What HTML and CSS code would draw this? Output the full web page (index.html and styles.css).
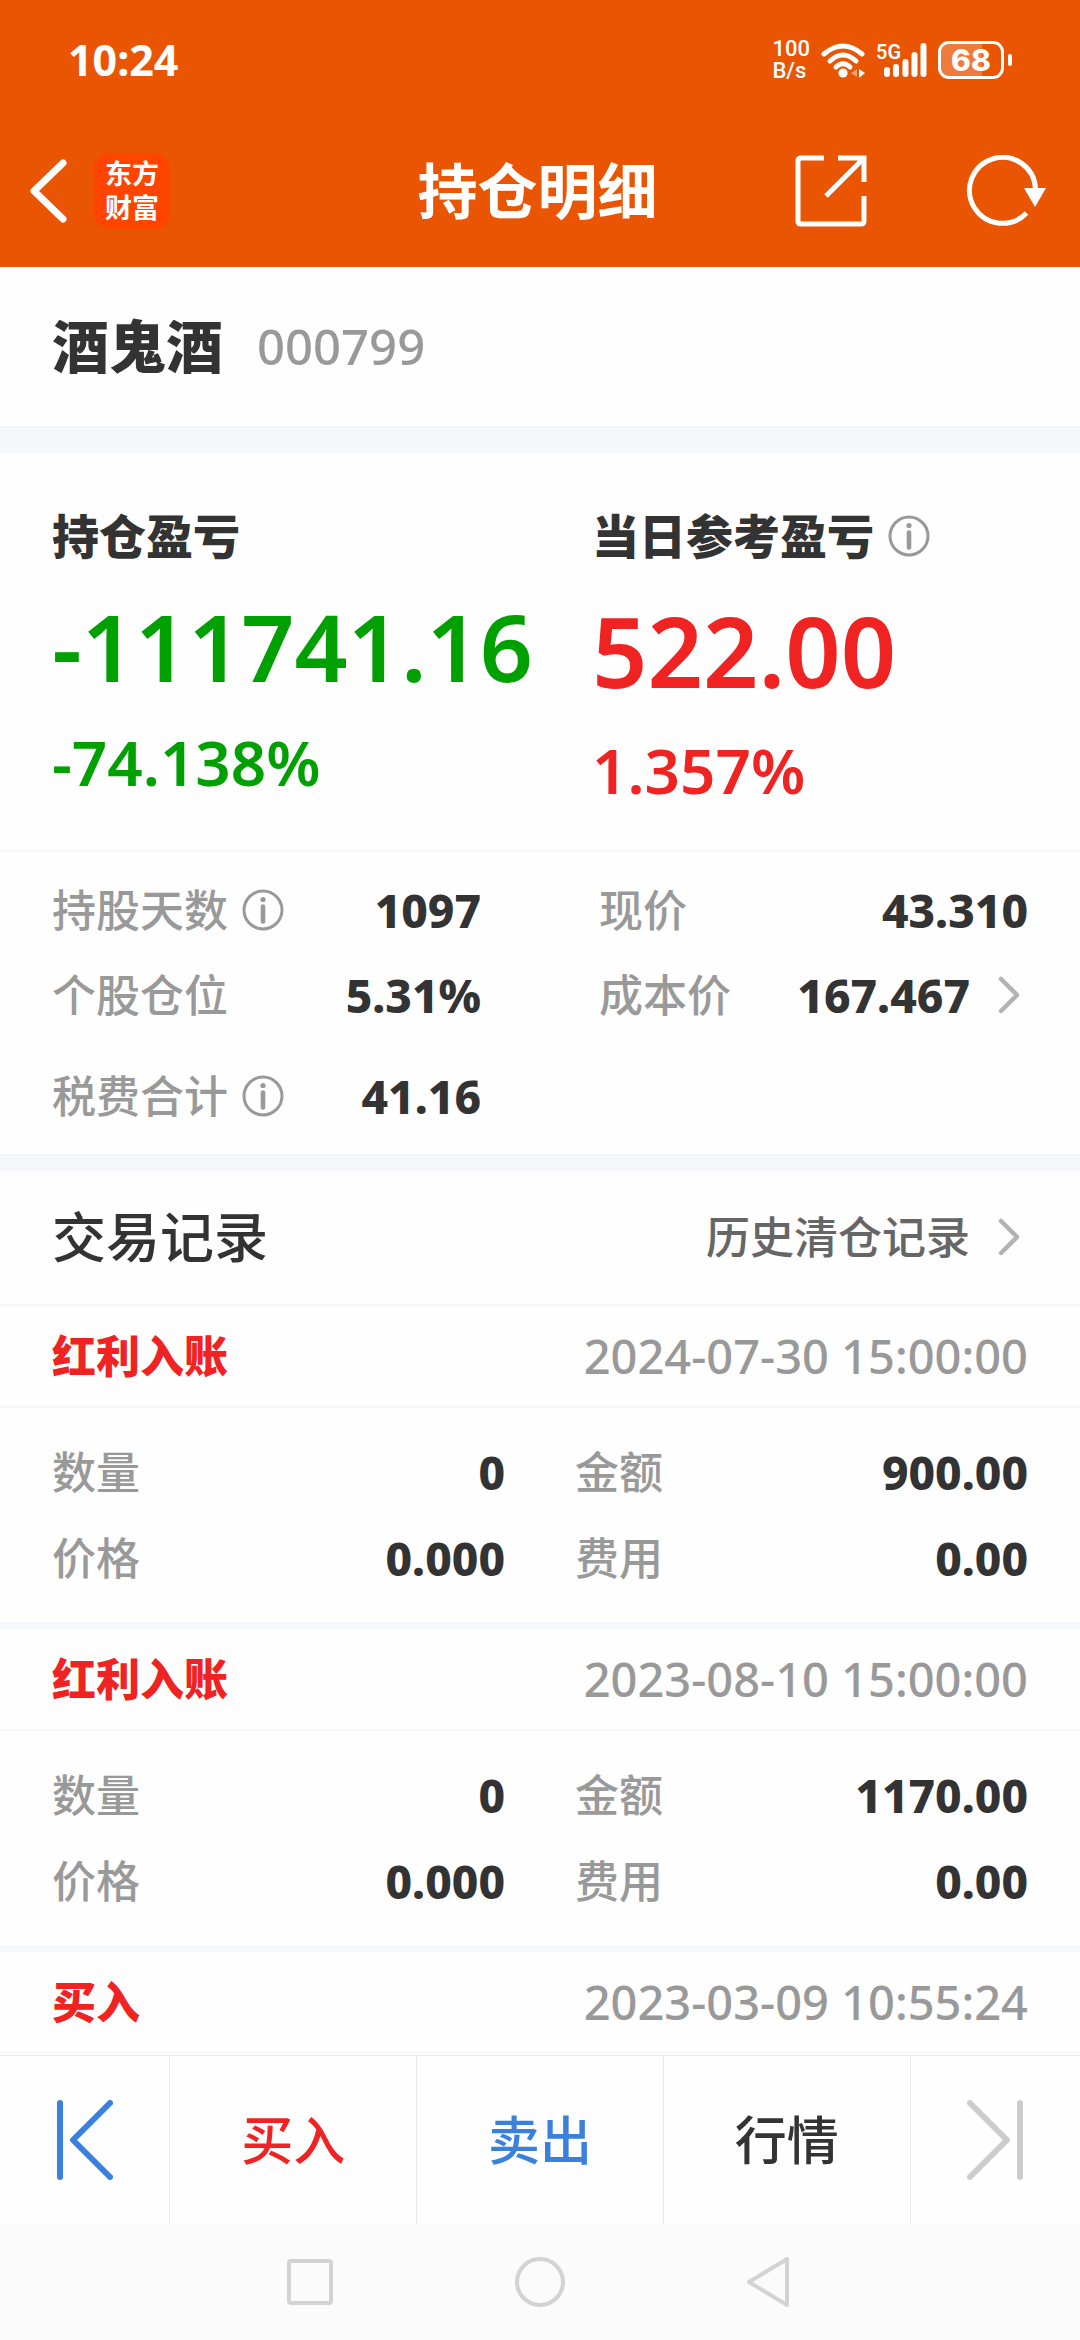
FILE: index.html
```html
<!DOCTYPE html>
<html lang="zh-CN">
<head>
    <meta charset="UTF-8">
    <meta name="viewport" content="width=device-width, initial-scale=1.0">
    <title>持仓明细</title>
    <link rel="stylesheet" href="styles.css">
</head>
<body>
    <!-- 图标定义 -->
    <svg class="sprite" aria-hidden="true">
        <symbol id="icon-info" viewBox="0 0 42 42">
            <circle cx="21" cy="21" r="19" fill="none" stroke="currentColor" stroke-width="3"/>
            <circle cx="21" cy="10.500" r="2.600" fill="currentColor"/>
            <path d="M21 17.500v15" stroke="currentColor" stroke-width="4.600" stroke-linecap="round"/>
        </symbol>
        <symbol id="icon-more" viewBox="0 0 22 38">
            <path d="M3 3l16 16L3 35" fill="none" stroke="currentColor" stroke-width="4.500" stroke-linecap="round" stroke-linejoin="round"/>
        </symbol>
    </svg>

    <div class="app">
        <header class="header">
            <div class="status-bar">
                <span class="clock">10:24</span>
                <div class="status-icons">
                    <div class="net-speed"><span>100</span><span>B/s</span></div>
                    <svg class="wifi" viewBox="0 0 44 36" width="44" height="36" fill="none" stroke="#fff" stroke-width="5" stroke-linecap="round">
                        <path d="M3 12Q22-4 41 12"/>
                        <path d="M9 19Q22 7 35 19"/>
                        <path d="M15 25Q22 18.500 29 25"/>
                        <circle cx="22" cy="31" r="4.600" fill="#fff" stroke="none"/>
                        <path d="M30 31l6-4v8z" fill="#f5a070" stroke="none"/>
                        <path d="M38 27l6 4-6 5z" fill="#fff" stroke="none"/>
                    </svg>
                    <div class="signal">
                        <span class="signal-type">5G</span>
                        <svg viewBox="0 0 44 34" width="44" height="34" stroke="#fff" stroke-width="6" stroke-linecap="round">
                            <path d="M4 27v4M13 24v7M22.500 19v12M31.500 12v19M40.500 3v28"/>
                        </svg>
                    </div>
                    <div class="battery"><span>68</span></div>
                </div>
            </div>
            <nav class="nav-bar">
                <div class="nav-left">
                    <button class="icon-btn" type="button" aria-label="返回">
                        <svg viewBox="0 0 38 64" width="38" height="64" fill="none" stroke="#fff" stroke-width="7" stroke-linecap="round" stroke-linejoin="round">
                            <path d="M34 4L5 32l29 28"/>
                        </svg>
                    </button>
                    <span class="logo">东方<br>财富</span>
                </div>
                <h1 class="nav-title">持仓明细</h1>
                <div class="nav-right">
                    <button class="icon-btn" type="button" aria-label="分享">
                        <svg viewBox="0 0 72 72" width="72" height="72" fill="none" stroke="#fff" stroke-width="5">
                            <path d="M29 3H6Q3 3 3 6v60q0 3 3 3h60q3 0 3-3V41"/>
                            <path d="M43 3h26v24M68 4L31 41"/>
                        </svg>
                    </button>
                    <button class="icon-btn" type="button" aria-label="刷新">
                        <svg viewBox="0 0 80 72" width="80" height="72" fill="none" stroke="#fff" stroke-width="5">
                            <path d="M60.500 58A33 33 0 1 1 69.500 34"/>
                            <path d="M58 33h22L69 52z" fill="#fff" stroke="none"/>
                        </svg>
                    </button>
                </div>
            </nav>
        </header>

        <main class="content">
            <section class="stock">
                <h2 class="stock-name">酒鬼酒</h2>
                <span class="stock-code">000799</span>
            </section>

            <section class="profit">
                <div class="profit-item down">
                    <h3>持仓盈亏</h3>
                    <div class="amount">-111741.16</div>
                    <div class="percent">-74.138%</div>
                </div>
                <div class="profit-item up">
                    <h3>当日参考盈亏 <svg class="info"><use href="#icon-info"/></svg></h3>
                    <div class="amount amount-lg">522.00</div>
                    <div class="percent">1.357%</div>
                </div>
            </section>

            <section class="stats">
                <dl>
                    <div class="row"><dt>持股天数 <svg class="info"><use href="#icon-info"/></svg></dt><dd>1097</dd></div>
                    <div class="row"><dt>个股仓位</dt><dd>5.31%</dd></div>
                    <div class="row row-tax"><dt>税费合计 <svg class="info"><use href="#icon-info"/></svg></dt><dd>41.16</dd></div>
                </dl>
                <dl>
                    <div class="row"><dt>现价</dt><dd>43.310</dd></div>
                    <div class="row"><dt>成本价</dt><dd>167.467 <svg class="more"><use href="#icon-more"/></svg></dd></div>
                </dl>
            </section>

            <section class="records">
                <div class="records-head">
                    <h2>交易记录</h2>
                    <a href="#">历史清仓记录 <svg class="more"><use href="#icon-more"/></svg></a>
                </div>

                <article class="record">
                    <div class="record-head">
                        <h3>红利入账</h3>
                        <time>2024-07-30 15:00:00</time>
                    </div>
                    <dl class="record-body">
                        <div class="row"><dt>数量</dt><dd>0</dd></div>
                        <div class="row"><dt>金额</dt><dd>900.00</dd></div>
                        <div class="row"><dt>价格</dt><dd>0.000</dd></div>
                        <div class="row"><dt>费用</dt><dd>0.00</dd></div>
                    </dl>
                </article>

                <article class="record">
                    <div class="record-head">
                        <h3>红利入账</h3>
                        <time>2023-08-10 15:00:00</time>
                    </div>
                    <dl class="record-body">
                        <div class="row"><dt>数量</dt><dd>0</dd></div>
                        <div class="row"><dt>金额</dt><dd>1170.00</dd></div>
                        <div class="row"><dt>价格</dt><dd>0.000</dd></div>
                        <div class="row"><dt>费用</dt><dd>0.00</dd></div>
                    </dl>
                </article>

                <article class="record">
                    <div class="record-head">
                        <h3>买入</h3>
                        <time>2023-03-09 10:55:24</time>
                    </div>
                </article>
            </section>
        </main>

        <footer class="tab-bar">
            <button class="prev" type="button" aria-label="上一只">
                <svg viewBox="0 0 56 80" width="56" height="80" fill="none" stroke="currentColor" stroke-width="6" stroke-linecap="round" stroke-linejoin="round">
                    <path d="M3 3v74M53 3L16 40l37 37"/>
                </svg>
            </button>
            <button class="buy" type="button">买入</button>
            <button class="sell" type="button">卖出</button>
            <button class="quote" type="button">行情</button>
            <button class="next" type="button" aria-label="下一只">
                <svg viewBox="0 0 56 80" width="56" height="80" fill="none" stroke="currentColor" stroke-width="6" stroke-linecap="round" stroke-linejoin="round">
                    <path d="M53 3v74M3 3l37 37L3 77"/>
                </svg>
            </button>
        </footer>

        <div class="system-nav">
            <svg viewBox="0 0 50 52" width="50" height="52"><rect x="4" y="5" width="42" height="42" rx="2"/></svg>
            <svg viewBox="0 0 52 52" width="52" height="52"><circle cx="26" cy="26" r="23"/></svg>
            <svg viewBox="0 0 50 52" width="50" height="52"><path d="M42 3v46L4 26z"/></svg>
        </div>
    </div>
</body>
</html>
```

FILE: styles.css
```css
:root {
    --brand: #EA5504;
    --logo: #FF4400;
    --text: #333333;
    --gray: #999999;
    --red: #F02323;
    --green: #00A000;
    --blue: #3A80DC;
    --band: #F6F7FA;
    --line: #F8F8F8;
    --side: 52px;
}

* {
    box-sizing: border-box;
    margin: 0;
    padding: 0;
}

body {
    font-family: 'Noto Sans', 'Noto Sans CJK SC', sans-serif;
    font-size: 44px;
    line-height: 56px;
    color: var(--text);
    background: #FEFEFE;
}

button {
    font: inherit;
    color: inherit;
    background: none;
    border: 0;
}

svg {
    display: block;
}

.sprite {
    position: absolute;
    width: 0;
    height: 0;
}

.app {
    display: flex;
    flex-direction: column;
    height: 100vh;
}

/* 顶部 */
.header {
    flex: none;
    padding-bottom: 38px;
    background: var(--brand);
    color: #FFFFFF;
}

.status-bar {
    display: flex;
    justify-content: space-between;
    align-items: center;
    padding: 32px 68px 31px 68px;
}

.clock {
    font-size: 43px;
    font-weight: 700;
}

.status-icons {
    display: flex;
    align-items: center;
    gap: 11px;
}

.net-speed {
    display: flex;
    flex-direction: column;
    font-family: Roboto, sans-serif;
    font-size: 22px;
    font-weight: 500;
    line-height: 22px;
}

.signal {
    display: flex;
    position: relative;
    padding-left: 7px;
}

.signal-type {
    position: absolute;
    top: 0;
    left: 0;
    font-family: Roboto, sans-serif;
    font-size: 20px;
    font-weight: 600;
    line-height: 18px;
}

.battery {
    position: relative;
    width: 66px;
    height: 38px;
    margin-right: 8px;
    border: 3px solid #FFFFFF;
    border-radius: 11px;
    background: linear-gradient(90deg, rgba(255, 255, 255, 0.22) 68%, transparent 68%);
    font-family: Inter, sans-serif;
    font-size: 30px;
    font-weight: 800;
    line-height: 32px;
    text-align: center;
}

.battery::after {
    content: '';
    position: absolute;
    top: 10px;
    right: -11px;
    width: 4px;
    height: 12px;
    border-radius: 2px;
    background: #FFFFFF;
}

.nav-bar {
    display: grid;
    grid-template-columns: 1fr auto 1fr;
    align-items: center;
    padding: 34px 34px 0 29px;
}

.nav-left,
.nav-right {
    display: flex;
    align-items: center;
}

.nav-left {
    gap: 27px;
}

.nav-right {
    justify-content: flex-end;
    gap: 99px;
}

.nav-title {
    font-size: 60px;
    font-weight: 600;
    line-height: 76px;
}

.logo {
    width: 76px;
    padding: 4px 0;
    border-radius: 16px;
    background: var(--logo);
    font-size: 27px;
    font-weight: 700;
    line-height: 34px;
    text-align: center;
}

/* 股票名称 */
.stock {
    display: flex;
    align-items: center;
    gap: 34px;
    padding: 41px var(--side) 42px;
}

.stock-name {
    font-size: 57px;
    font-weight: 800;
    line-height: 76px;
}

.stock-code {
    font-size: 49px;
    font-weight: 500;
    color: var(--gray);
}

/* 盈亏 */
.profit {
    display: grid;
    grid-template-columns: 1fr 1fr;
    padding: 55px 0 44px;
    border-top: 27px solid var(--band);
    border-bottom: 2px solid var(--line);
}

.profit-item {
    padding-left: var(--side);
}

.amount {
    font-size: 93px;
    font-weight: 600;
    line-height: 108px;
}

.amount-lg {
    font-size: 97px;
    line-height: 116px;
}

.percent {
    margin-top: 26px;
    font-size: 62px;
    font-weight: 600;
    line-height: 72px;
}

.up {
    color: var(--red);
}

.down {
    color: var(--green);
}

.profit-item h3 {
    display: flex;
    align-items: center;
    gap: 14px;
    margin-bottom: 28px;
    font-size: 47px;
    font-weight: 800;
    line-height: 56px;
    color: var(--text);
}

.info {
    width: 42px;
    height: 42px;
    color: var(--gray);
}

.more {
    width: 22px;
    height: 38px;
    margin-right: 8px;
    color: #B3B3B3;
}

/* 持仓数据 */
.row {
    display: flex;
    justify-content: space-between;
    align-items: center;
}

.row dt {
    display: flex;
    align-items: center;
    gap: 14px;
    font-weight: 500;
    color: var(--gray);
}

.row dd {
    display: flex;
    align-items: center;
    gap: 28px;
    font-size: 46px;
    font-weight: 800;
}

.stats {
    display: grid;
    grid-template-columns: 1fr 1fr;
    gap: 118px;
    padding: 30px var(--side);
    border-bottom: 17px solid var(--band);
}

.stats dl {
    display: flex;
    flex-direction: column;
    gap: 29px;
}

.row-tax {
    margin-top: 16px;
}

/* 交易记录 */
.content {
    flex: 1;
    min-height: 0;
    overflow: hidden;
}

.records-head,
.record-head {
    display: flex;
    justify-content: space-between;
    align-items: center;
    border-bottom: 2px solid var(--line);
}

.records-head {
    padding: 34px var(--side) 35px;
}

.records-head h2 {
    font-size: 54px;
    font-weight: 500;
    line-height: 64px;
}

.records-head a {
    display: flex;
    align-items: center;
    gap: 28px;
    font-weight: 500;
    color: #666666;
    text-decoration: none;
}

.record + .record {
    border-top: 7px solid var(--band);
}

.record-head {
    padding: 22px var(--side);
}

.record-head h3 {
    font-size: 44px;
    font-weight: 800;
    color: var(--red);
}

.record-head time {
    font-size: 47px;
    font-weight: 500;
    color: var(--gray);
}

.record-body {
    display: grid;
    grid-template-columns: 1fr 1fr;
    gap: 30px 70px;
    padding: 36px var(--side);
}

/* 底部操作栏 */
.tab-bar {
    display: flex;
    flex: none;
    border-top: 1px solid #E8E8E8;
}

.tab-bar button {
    display: flex;
    flex: 247;
    justify-content: center;
    align-items: center;
    padding: 44px 0;
    font-size: 52px;
    font-weight: 500;
    line-height: 80px;
}

.tab-bar button + button {
    border-left: 1px solid #E8E8E8;
}

.tab-bar .prev,
.tab-bar .next {
    flex: 170;
}

.prev,
.sell {
    color: var(--blue);
}

.buy {
    color: var(--red);
}

.tab-bar .next {
    color: #CCCCCC;
}

/* 系统导航 */
.system-nav {
    display: flex;
    flex: none;
    justify-content: center;
    gap: 179px;
    padding: 32px 0;
    background: #FBFBFB;
    fill: none;
    stroke: #D3D3D3;
    stroke-width: 4;
    stroke-linejoin: round;
}
```
